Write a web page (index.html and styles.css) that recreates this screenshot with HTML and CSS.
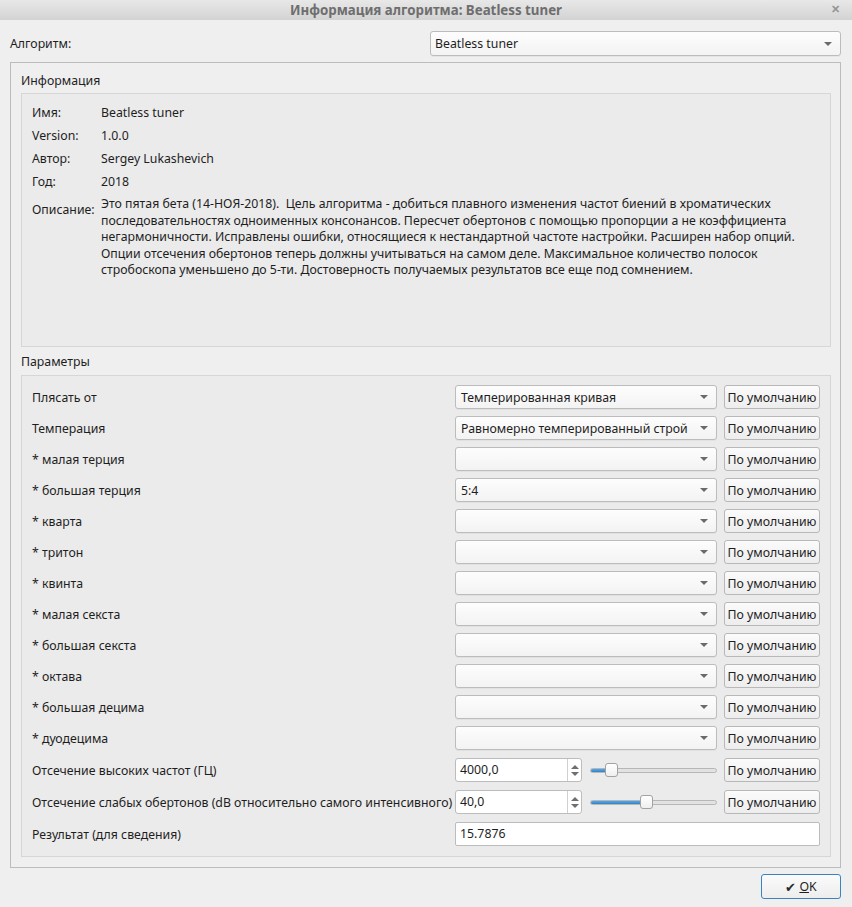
FILE: index.html
```html
<!DOCTYPE html>
<html lang="ru">
<head>
<meta charset="utf-8">
<title>Информация алгоритма: Beatless tuner</title>
<link rel="stylesheet" href="styles.css">
</head>
<body>
<div class="window">
  <div class="titlebar">
    <span class="title">Информация алгоритма: Beatless tuner</span>
    <span class="close">✕</span>
  </div>
  <div class="content">
    <div class="algo-row">
      <span class="algo-label">Алгоритм:</span>
      <div class="combo algo-combo"><span class="combo-text">Beatless tuner</span><span class="arrow"></span></div>
    </div>
    <div class="group">
      <div class="heading">Информация</div>
      <div class="box info">
        <div class="info-row"><span class="ilabel">Имя:</span><span>Beatless tuner</span></div>
        <div class="info-row"><span class="ilabel">Version:</span><span>1.0.0</span></div>
        <div class="info-row"><span class="ilabel">Автор:</span><span>Sergey Lukashevich</span></div>
        <div class="info-row"><span class="ilabel">Год:</span><span>2018</span></div>
        <div class="desc-row">
          <span class="ilabel desc-label">Описание:</span>
          <p class="desc">Это пятая бета (14-НОЯ-2018).&nbsp; Цель алгоритма - добиться плавного изменения частот биений в хроматических<br>последовательностях одноименных консонансов. Пересчет обертонов с помощью пропорции а не коэффициента<br>негармоничности. Исправлены ошибки, относящиеся к нестандартной частоте настройки. Расширен набор опций.<br>Опции отсечения обертонов теперь должны учитываться на самом деле. Максимальное количество полосок<br>стробоскопа уменьшено до 5-ти. Достоверность получаемых результатов все еще под сомнением.</p>
        </div>
      </div>
      <div class="heading heading-params">Параметры</div>
      <div class="box params">
        <div class="prow"><span class="plabel">Плясать от</span><div class="combo"><span class="combo-text">Темперированная кривая</span><span class="arrow"></span></div><button class="btn">По умолчанию</button></div>
        <div class="prow"><span class="plabel">Темперация</span><div class="combo"><span class="combo-text">Равномерно темперированный строй</span><span class="arrow"></span></div><button class="btn">По умолчанию</button></div>
        <div class="prow"><span class="plabel">* малая терция</span><div class="combo"><span class="combo-text"></span><span class="arrow"></span></div><button class="btn">По умолчанию</button></div>
        <div class="prow"><span class="plabel">* большая терция</span><div class="combo"><span class="combo-text">5:4</span><span class="arrow"></span></div><button class="btn">По умолчанию</button></div>
        <div class="prow"><span class="plabel">* кварта</span><div class="combo"><span class="combo-text"></span><span class="arrow"></span></div><button class="btn">По умолчанию</button></div>
        <div class="prow"><span class="plabel">* тритон</span><div class="combo"><span class="combo-text"></span><span class="arrow"></span></div><button class="btn">По умолчанию</button></div>
        <div class="prow"><span class="plabel">* квинта</span><div class="combo"><span class="combo-text"></span><span class="arrow"></span></div><button class="btn">По умолчанию</button></div>
        <div class="prow"><span class="plabel">* малая секста</span><div class="combo"><span class="combo-text"></span><span class="arrow"></span></div><button class="btn">По умолчанию</button></div>
        <div class="prow"><span class="plabel">* большая секста</span><div class="combo"><span class="combo-text"></span><span class="arrow"></span></div><button class="btn">По умолчанию</button></div>
        <div class="prow"><span class="plabel">* октава</span><div class="combo"><span class="combo-text"></span><span class="arrow"></span></div><button class="btn">По умолчанию</button></div>
        <div class="prow"><span class="plabel">* большая децима</span><div class="combo"><span class="combo-text"></span><span class="arrow"></span></div><button class="btn">По умолчанию</button></div>
        <div class="prow"><span class="plabel">* дуодецима</span><div class="combo"><span class="combo-text"></span><span class="arrow"></span></div><button class="btn">По умолчанию</button></div>
        <div class="prow prow-spin"><span class="plabel">Отсечение высоких частот (ГЦ)</span>
          <div class="spin-slider">
            <div class="spin"><span class="spin-text">4000,0</span><span class="spin-btns"><span class="up"></span><span class="down"></span></span></div>
            <div class="slider"><div class="groove"><div class="fill" style="width: 13%"></div></div><div class="handle" style="left: 15px"></div></div>
          </div>
          <button class="btn">По умолчанию</button></div>
        <div class="prow prow-spin"><span class="plabel">Отсечение слабых обертонов (dB относительно самого интенсивного)</span>
          <div class="spin-slider">
            <div class="spin"><span class="spin-text">40,0</span><span class="spin-btns"><span class="up"></span><span class="down"></span></span></div>
            <div class="slider"><div class="groove"><div class="fill" style="width: 42%"></div></div><div class="handle" style="left: 50px"></div></div>
          </div>
          <button class="btn">По умолчанию</button></div>
        <div class="prow prow-spin"><span class="plabel">Результат (для сведения)</span><div class="lineedit">15.7876</div></div>
      </div>
    </div>
    <div class="footer">
      <button class="btn ok"><span class="check">✔</span><span><u>O</u>K</span></button>
    </div>
  </div>
</div>
</body>
</html>
```

FILE: styles.css
```css
* { box-sizing: border-box; }
html, body { margin: 0; padding: 0; }
body {
  background: #efefef;
  font-family: "Noto Sans", "Open Sans", sans-serif;
  font-size: 12.3px;
  color: #1e1e1e;
  width: 852px;
  height: 907px;
  overflow: hidden;
}
.titlebar {
  height: 20px;
  background: linear-gradient(#e8e8e8, #d3d3d3);
  display: flex;
  align-items: center;
  justify-content: center;
  position: relative;
}
.title {
  font-weight: bold;
  color: #6e6e6e;
  font-size: 13.3px;
  line-height: 20px;
}
.close {
  position: absolute;
  right: 12px;
  top: 0;
  line-height: 18px;
  font-size: 11px;
  font-weight: bold;
  color: #959595;
}
.content {
  padding: 11px 11px 0 10px;
}
.algo-row {
  display: flex;
  align-items: center;
  justify-content: space-between;
  height: 25px;
}
.algo-label { line-height: 25px; }
.combo {
  height: 24px;
  border: 1px solid #bcbcbc;
  border-radius: 3px;
  background: linear-gradient(#fdfdfd, #f3f3f3);
  display: flex;
  align-items: center;
  justify-content: space-between;
  padding: 0 6px 0 5px;
  box-shadow: 0 1px 0 rgba(0,0,0,0.04);
}
.algo-combo { width: 411px; height: 25px; padding-left: 4px; }
.combo-text { white-space: nowrap; }
.arrow {
  width: 0; height: 0;
  border-left: 4px solid transparent;
  border-right: 4px solid transparent;
  border-top: 4px solid #6a6a6a;
  margin-right: 2px;
}
.group {
  margin-top: 6px;
  border: 1px solid #bcbcbc;
  padding: 9px 9px 9px 10px;
  height: 806px;
}
.heading {
  line-height: 18px;
  height: 18px;
  margin-bottom: 3px;
}
.heading-params { margin-top: 6px; margin-bottom: 4px; }
.box {
  border: 1px solid #d6d6d6;
  background: #ebebeb;
  padding: 0 10px;
}
.info {
  height: 254px;
  padding-top: 7px;
}
.info-row {
  display: flex;
  height: 23px;
  line-height: 23px;
}
.ilabel {
  width: 69px;
  flex: none;
}
.desc-row {
  display: flex;
  margin-top: 3px;
}
.desc-label { padding-top: 6px; line-height: 16.5px; }
.desc {
  margin: 0;
  line-height: 16.5px;
  white-space: nowrap;
}
.params {
  padding-top: 9px;
  padding-bottom: 10px;
  display: flex;
  flex-direction: column;
  gap: 7px;
}
.prow {
  display: grid;
  grid-template-columns: minmax(0, 1fr) 262px 96px;
  column-gap: 7px;
  height: 24px;
  align-items: center;
}
.prow-spin { margin-top: 1px; }
.plabel { white-space: nowrap; }
.btn {
  font-family: inherit;
  font-size: 12.3px;
  color: #1e1e1e;
  height: 24px;
  border: 1px solid #b8b8b8;
  border-radius: 3px;
  background: linear-gradient(#fbfbfb, #ededed);
  padding: 0;
  white-space: nowrap;
}
.spin-slider {
  display: flex;
  align-items: center;
  gap: 8px;
}
.spin {
  width: 127px;
  flex: none;
  height: 24px;
  border: 1px solid #bcbcbc;
  border-radius: 3px;
  background: #fff;
  display: flex;
  justify-content: space-between;
  align-items: stretch;
}
.spin-text { padding-left: 4px; line-height: 22px; }
.spin-btns {
  width: 14px;
  border-left: 1px solid #d0d0d0;
  display: flex;
  flex-direction: column;
  align-items: center;
  justify-content: center;
  gap: 3px;
}
.up {
  width: 0; height: 0;
  border-left: 4px solid transparent;
  border-right: 4px solid transparent;
  border-bottom: 4px solid #6f6f6f;
}
.down {
  width: 0; height: 0;
  border-left: 4px solid transparent;
  border-right: 4px solid transparent;
  border-top: 4px solid #6f6f6f;
}
.slider {
  position: relative;
  width: 127px;
  flex: none;
  height: 14px;
  display: flex;
  align-items: center;
}
.groove {
  width: 100%;
  height: 5px;
  border: 1px solid #b6b6b6;
  border-radius: 3px;
  background: #e2e2e2;
  overflow: hidden;
  position: relative;
}
.fill {
  height: 100%;
  background: linear-gradient(#5ba6e6, #2f84cc);
}
.handle {
  position: absolute;
  top: 0;
  width: 13px;
  height: 14px;
  border: 1px solid #a2a2a2;
  border-radius: 3px;
  background: linear-gradient(#ffffff, #efefef);
}
.lineedit {
  grid-column: 2 / 4;
  height: 24px;
  border: 1px solid #bcbcbc;
  border-radius: 2px;
  background: #fff;
  padding-left: 4px;
  line-height: 22px;
}
.footer {
  display: flex;
  justify-content: flex-end;
  margin-top: 6px;
}
.ok {
  width: 80px;
  height: 25px;
  border-color: #3a83c2;
  display: flex;
  align-items: center;
  justify-content: center;
  gap: 3px;
}
.check { font-size: 13px; color: #2a2a2a; }
```
